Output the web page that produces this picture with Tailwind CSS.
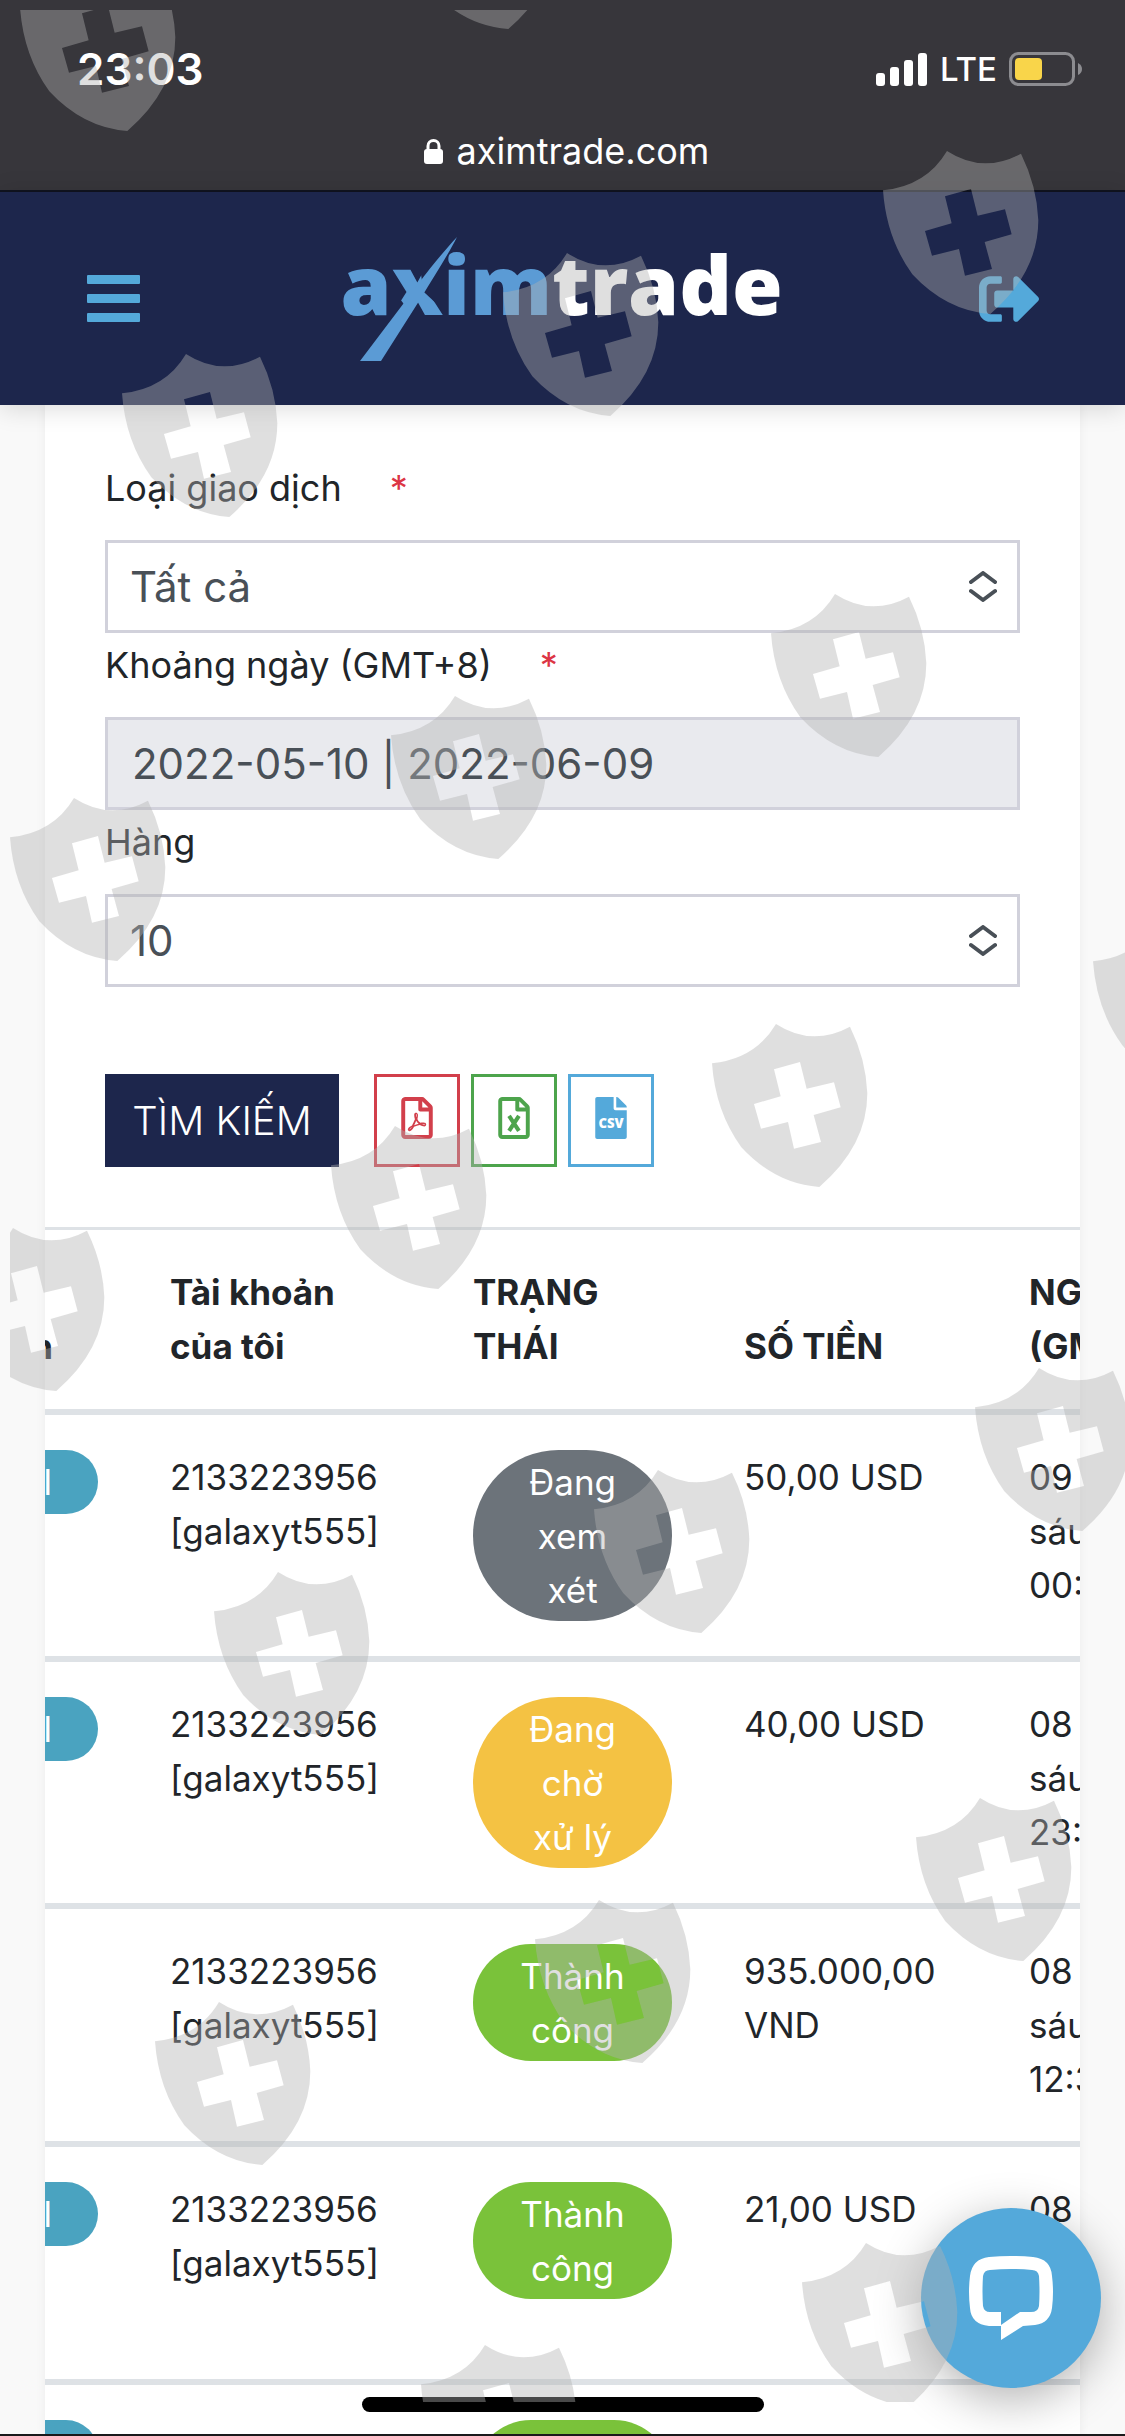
<!DOCTYPE html>
<html lang="vi">
<head>
  <meta charset="UTF-8" />
  <meta name="viewport" content="width=device-width, initial-scale=1.0" />
  <title>AximTrade</title>
  <script src="https://cdn.jsdelivr.net/npm/@tailwindcss/browser@4"></script>
</head>
<body class="bg-[#f9f9f9] font-[Inter,'Noto_Sans',sans-serif] text-[#212529]">
  <div class="relative flex flex-col h-screen overflow-hidden">

    <!-- Status bar -->
    <div class="shrink-0 bg-[#37363b] text-white border-b-2 border-[#10131f] pt-[42px] pb-[12px]">
      <div class="flex items-center justify-between h-[54px] pl-[77px] pr-[43px]">
        <span class="text-[44px] font-semibold">23:03</span>
        <div class="flex items-center gap-[12px]">
          <svg class="w-[52px] h-[33px]" viewBox="0 0 52 33" fill="#fff">
            <rect x="0" y="20" width="9" height="13" rx="3" />
            <rect x="14" y="14" width="9" height="19" rx="3" />
            <rect x="28" y="7" width="9" height="26" rx="3" />
            <rect x="42" y="0" width="9" height="33" rx="3" />
          </svg>
          <span class="text-[33px] leading-[54px] font-medium">LTE</span>
          <svg class="w-[73px] h-[34px]" viewBox="0 0 73 34">
            <rect x="1.5" y="1.5" width="63" height="31" rx="8" fill="none" stroke="#8c8c90" stroke-width="3" />
            <rect x="6" y="6" width="27" height="22" rx="4" fill="#f9d54a" />
            <path d="M69 11q4 2 4 6t-4 6z" fill="#8c8c90" />
          </svg>
        </div>
      </div>
      <div class="flex items-center justify-center gap-[14px] h-[54px] mt-[28px] pl-[8px]">
        <svg class="w-[19px] h-[26px]" viewBox="0 0 19 26">
          <path d="M4 12V8a5.500 5.500 0 0 1 11 0v4" fill="none" stroke="#fff" stroke-width="3" />
          <rect x="0" y="11" width="19" height="15" rx="3" fill="#fff" />
        </svg>
        <span class="text-[36px] leading-[54px]">aximtrade.com</span>
      </div>
    </div>

    <!-- Header -->
    <header class="relative z-10 shrink-0 flex items-center justify-between h-[213px] bg-[#1d264c] pl-[87px] pr-[86px] shadow-[0_3px_24px_rgba(0,0,0,0.15)]">
      <button type="button" aria-label="Menu">
        <svg class="w-[53px] h-[47px]" viewBox="0 0 53 47" fill="#54a9da">
          <rect width="53" height="9" rx="1" />
          <rect y="19" width="53" height="9" rx="1" />
          <rect y="38" width="53" height="9" rx="1" />
        </svg>
      </button>
      <a href="#" class="relative block w-[438px] h-[124px] font-['Open_Sans'] font-extrabold text-[82px] leading-[92px] whitespace-nowrap text-[#5b9bd5]">
        <span>a</span><span class="inline-block [clip-path:polygon(0_0,46%_0,62%_60%,100%_80%,100%_100%,60%_100%,0_56%)]">x</span><span>im</span><span class="text-white">trade</span>
        <svg class="absolute left-[18px] top-0 w-[100px] h-[124px]" viewBox="0 0 100 124" fill="#5b9bd5">
          <path d="M98 0C86 13 70 32 60 46L1 124H22L62 61C76 38 90 16 98 0z" />
        </svg>
      </a>
      <button type="button" aria-label="Đăng xuất">
        <svg class="w-[60px] h-[46px]" viewBox="0 64 504 384" fill="#54a9da">
          <path d="M497 273L329 441c-15 15-41 4.500-41-17v-96H152c-13.300 0-24-10.700-24-24v-96c0-13.300 10.700-24 24-24h136V88c0-21.400 25.900-32 41-17l168 168c9.300 9.400 9.300 24.600 0 34zM192 436v-40c0-6.600-5.400-12-12-12H96c-17.700 0-32-14.300-32-32V160c0-17.700 14.300-32 32-32h84c6.600 0 12-5.400 12-12V76c0-6.600-5.400-12-12-12H96c-53 0-96 43-96 96v192c0 53 43 96 96 96h84c6.600 0 12-5.400 12-12z" />
        </svg>
      </button>
    </header>

    <!-- Card -->
    <main class="grow min-h-0 mx-[45px] bg-white shadow-[0_0_10px_rgba(0,0,0,0.06)]">
      <form class="px-[60px] pt-[51px]">
        <div>
          <label for="type" class="flex gap-[48px] h-[84px] pt-[5px] text-[36px] leading-[54px]">Loại giao dịch <span class="text-[#dc3545]">*</span></label>
          <div class="relative">
            <select id="type" class="appearance-none block w-full h-[93px] border-3 border-[#d1d1db] bg-white px-[22px] text-[42px] text-[#495057]">
              <option>Tất cả</option>
            </select>
            <svg class="absolute right-[23px] top-[31px] w-[28px] h-[31px] pointer-events-none" viewBox="0 0 28 31" fill="none" stroke="#495057" stroke-width="4" stroke-linecap="round" stroke-linejoin="round">
              <path d="M2 11L14 2l12 9M2 20l12 9 12-9" />
            </svg>
          </div>
        </div>
        <div>
          <label for="range" class="flex gap-[48px] h-[84px] pt-[5px] text-[36px] leading-[54px]">Khoảng ngày (GMT+8) <span class="text-[#dc3545]">*</span></label>
          <input id="range" type="text" readonly value="2022-05-10 | 2022-06-09" class="block w-full h-[93px] border-3 border-[#d1d1db] bg-[#e9eaee] px-[24px] text-[42px] text-[#495057]" />
        </div>
        <div>
          <label for="rows" class="flex h-[84px] pt-[5px] text-[36px] leading-[54px]">Hàng</label>
          <div class="relative">
            <select id="rows" class="appearance-none block w-full h-[93px] border-3 border-[#d1d1db] bg-white px-[22px] text-[42px] text-[#495057]">
              <option>10</option>
            </select>
            <svg class="absolute right-[23px] top-[31px] w-[28px] h-[31px] pointer-events-none" viewBox="0 0 28 31" fill="none" stroke="#495057" stroke-width="4" stroke-linecap="round" stroke-linejoin="round">
              <path d="M2 11L14 2l12 9M2 20l12 9 12-9" />
            </svg>
          </div>
        </div>
        <div class="flex h-[93px] mt-[87px] mb-[60px]">
          <button type="submit" class="w-[234px] mr-[35px] bg-[#1d264c] text-white text-[40px] font-light">TÌM KIẾM</button>
          <div class="flex gap-[11px]">
            <button type="button" aria-label="PDF" class="flex justify-center pt-[20px] w-[86px] border-3 border-[#d23f4b] text-[#d23f4b]">
              <svg class="w-[32px] h-[42px]" viewBox="0 0 384 512" fill="currentColor">
                <path d="M369.900 97.900L286 14C277 5 264.800-.1 252.100-.1H48C21.500 0 0 21.500 0 48v416c0 26.500 21.500 48 48 48h288c26.500 0 48-21.500 48-48V131.900c0-12.700-5.100-25-14.100-34zM332.100 128H256V51.900l76.100 76.100zM48 464V48h160v104c0 13.300 10.700 24 24 24h104v288H48zm250.200-143.700c-12.200-12-47-8.700-64.400-6.500-17.200-10.500-28.700-25-36.800-46.300 3.900-16.100 10.100-40.600 5.400-56-4.200-26.200-37.800-23.600-42.600-5.900-4.400 16.100-.4 38.500 7 67.100-10 23.900-24.900 56-35.400 74.400-20 10.300-47 26.200-51 46.200-3.300 15.800 26 55.200 76.100-31.200 22.400-7.400 46.800-16.500 68.400-20.100 18.900 10.200 41 17 55.800 17 25.500 0 28-28.200 17.500-38.700zm-198.100 77.800c5.100-13.700 24.500-29.500 30.400-35-19 30.300-30.400 35.700-30.400 35zm81.600-190.600c7.400 0 6.700 32.100 1.800 40.800-4.400-13.900-4.300-40.800-1.800-40.800zm-24.400 136.600c9.700-16.900 18-37 24.700-54.700 8.300 15.100 18.900 27.200 30.100 35.500-20.800 4.300-38.900 13.100-54.800 19.200zm131.600-5s-5 6-37.300-7.800c35.100-2.600 40.900 5.400 37.300 7.800z" />
              </svg>
            </button>
            <button type="button" aria-label="Excel" class="flex justify-center pt-[20px] w-[86px] border-3 border-[#4da44c] text-[#4da44c]">
              <svg class="w-[32px] h-[42px]" viewBox="0 0 384 512" fill="currentColor">
                <path d="M369.900 97.900L286 14C277 5 264.800-.1 252.100-.1H48C21.500 0 0 21.500 0 48v416c0 26.500 21.500 48 48 48h288c26.500 0 48-21.500 48-48V131.900c0-12.700-5.100-25-14.100-34zM332.100 128H256V51.900l76.100 76.100zM48 464V48h160v104c0 13.300 10.700 24 24 24h104v288H48z" />
                <path d="M132 230l120 184M252 230L132 414" fill="none" stroke="currentColor" stroke-width="50" />
              </svg>
            </button>
            <button type="button" aria-label="CSV" class="flex justify-center pt-[20px] w-[86px] border-3 border-[#54a9da] text-[#54a9da]">
              <svg class="w-[32px] h-[42px]" viewBox="0 0 384 512">
                <path d="M224 136V0H24C10.700 0 0 10.700 0 24v464c0 13.300 10.700 24 24 24h336c13.300 0 24-10.700 24-24V160H248c-13.200 0-24-10.800-24-24zM384 122v6H256V0h6c6.400 0 12.500 2.500 17 7l98 98c4.500 4.500 7 10.600 7 17z" fill="currentColor" />
                <text x="192" y="382" text-anchor="middle" font-family="Open Sans" font-weight="800" font-size="160" fill="#fff">CSV</text>
              </svg>
            </button>
          </div>
        </div>
      </form>

      <!-- Transactions -->
      <div id="tableWrap" class="overflow-x-auto [scrollbar-width:none] border-t-3 border-[#dee2e6]">
        <table class="table-fixed w-[1459px] text-left text-[35px] leading-[54px]">
          <colgroup>
            <col class="w-[300px]" />
            <col class="w-[303px]" />
            <col class="w-[271px]" />
            <col class="w-[285px]" />
            <col class="w-[300px]" />
          </colgroup>
          <thead>
            <tr class="border-b-6 border-[#dee2e6] align-bottom font-bold">
              <th class="pr-[81px] pt-[35px] pb-[36px] text-right whitespace-nowrap">Phương tiện</th>
              <th class="px-[36px] pt-[35px] pb-[36px]">Tài khoản<br />của tôi</th>
              <th class="px-[36px] pt-[35px] pb-[36px]">TRẠNG<br />THÁI</th>
              <th class="px-[36px] pt-[35px] pb-[36px]">SỐ TIỀN</th>
              <th class="px-[36px] pt-[35px] pb-[36px]">NGÀY<br />(GMT+8)</th>
            </tr>
          </thead>
          <tbody>
            <tr class="border-b-6 border-[#dee2e6] align-top">
              <td class="px-[36px] py-[35px]"><span class="block rounded-[32px] bg-[#4aa3c0] text-white text-right py-[5px] pr-[46px]">Local</span></td>
              <td class="px-[36px] py-[35px]">2133223956<br />[galaxyt555]</td>
              <td class="px-[36px] py-[35px]"><span class="block rounded-full bg-[#6c737a] text-white text-center pt-[5px] pb-[4px]">Đang<br />xem<br />xét</span></td>
              <td class="px-[36px] py-[35px]">50,00 USD</td>
              <td class="px-[36px] py-[35px]">09 tháng<br />sáu 2022<br />00:02:11</td>
            </tr>
            <tr class="border-b-6 border-[#dee2e6] align-top">
              <td class="px-[36px] py-[35px]"><span class="block rounded-[32px] bg-[#4aa3c0] text-white text-right py-[5px] pr-[46px]">Local</span></td>
              <td class="px-[36px] py-[35px]">2133223956<br />[galaxyt555]</td>
              <td class="px-[36px] py-[35px]"><span class="block rounded-full bg-[#f4c243] text-white text-center pt-[5px] pb-[4px]">Đang<br />chờ<br />xử lý</span></td>
              <td class="px-[36px] py-[35px]">40,00 USD</td>
              <td class="px-[36px] py-[35px]">08 tháng<br />sáu 2022<br />23:40:05</td>
            </tr>
            <tr class="border-b-6 border-[#dee2e6] align-top">
              <td></td>
              <td class="px-[36px] py-[35px]">2133223956<br />[galaxyt555]</td>
              <td class="px-[36px] py-[35px]"><span class="block rounded-[58px] bg-[#7ac23a] text-white text-center pt-[5px] pb-[4px]">Thành<br />công</span></td>
              <td class="px-[36px] py-[35px]">935.000,00<br />VND</td>
              <td class="px-[36px] py-[35px]">08 tháng<br />sáu 2022<br />12:31:40</td>
            </tr>
            <tr class="border-b-6 border-[#dee2e6] align-top">
              <td class="px-[36px] py-[35px]"><span class="block rounded-[32px] bg-[#4aa3c0] text-white text-right py-[5px] pr-[46px]">Local</span></td>
              <td class="px-[36px] py-[35px]">2133223956<br />[galaxyt555]</td>
              <td class="px-[36px] py-[35px]"><span class="block rounded-[58px] bg-[#7ac23a] text-white text-center pt-[5px] pb-[4px]">Thành<br />công</span></td>
              <td class="px-[36px] py-[35px]">21,00 USD</td>
              <td class="px-[36px] py-[35px]">08 tháng<br />sáu 2022<br />10:15:22</td>
            </tr>
            <tr class="align-top">
              <td class="px-[36px] py-[35px]"><span class="block rounded-[32px] bg-[#4aa3c0] text-white text-right py-[5px] pr-[46px]">Local</span></td>
              <td class="px-[36px] py-[35px]">2133223956<br />[galaxyt555]</td>
              <td class="px-[36px] py-[35px]"><span class="block rounded-[58px] bg-[#7ac23a] text-white text-center pt-[5px] pb-[4px]">Thành<br />công</span></td>
              <td class="px-[36px] py-[35px]">20,00 USD</td>
              <td class="px-[36px] py-[35px]">08 tháng<br />sáu 2022<br />09:48:10</td>
            </tr>
          </tbody>
        </table>
      </div>
    </main>

    <!-- Chat -->
    <button type="button" aria-label="Chat" class="absolute z-20 right-[24px] bottom-[48px] flex items-center justify-center size-[180px] rounded-full bg-[#54a9da] shadow-[0_12px_48px_rgba(0,0,0,0.3)]">
      <svg class="w-[84px] h-[84px]" viewBox="0 0 84 84">
        <path fill-rule="evenodd" fill="#fff" d="M20 1Q42-1 64 1Q82 3 83 20Q85 36 83 52Q81 67 66 69L54 70L32 84V70H20Q2 68 1 52Q-1 36 1 20Q3 3 20 1zM21 14Q15 14 14 20Q13 36 14 50Q15 56 21 56H32V69L51 56H62Q69 56 70 50Q71 36 70 20Q69 14 63 14Q42 12 21 14z" />
      </svg>
    </button>

    <!-- Home indicator -->
    <div class="absolute z-20 bottom-[24px] left-1/2 -translate-x-1/2 w-[402px] h-[15px] rounded-full bg-black"></div>
    <div class="absolute z-20 bottom-0 inset-x-0 h-[2px] bg-[#1a1a1c]"></div>

    <!-- Shield watermark -->
    <svg class="absolute z-30 inset-0 w-full h-full pointer-events-none" fill="#b1b1b1" fill-opacity="0.41">
      <defs>
        <clipPath id="area"><rect x="10" y="10" width="2000" height="2392" /></clipPath>
        <path id="shield" transform="scale(0.3333)" fill-rule="evenodd" d="M192 0Q300 70 414 8Q462 105 466 208Q466 365 322 489Q190 480 88 370Q10 262 0 118Q130 105 192 0zM186 136L206 217 126 240 147 314 228 294 246 374 327 354 305 273 386 250 366 175 284 194 264 114z" />
      </defs>
      <g clip-path="url(#area)">
        <use href="#shield" transform="translate(20 -32)" />
        <use href="#shield" transform="translate(401 -134)" />
        <use href="#shield" transform="translate(883 151)" />
        <use href="#shield" transform="translate(503 253)" />
        <use href="#shield" transform="translate(122 354)" />
        <use href="#shield" transform="translate(771 594)" />
        <use href="#shield" transform="translate(391 696)" />
        <use href="#shield" transform="translate(10 798)" />
        <use href="#shield" transform="translate(1093 922)" />
        <use href="#shield" transform="translate(712 1024)" />
        <use href="#shield" transform="translate(331 1126)" />
        <use href="#shield" transform="translate(-51 1228)" />
        <use href="#shield" transform="translate(975 1368)" />
        <use href="#shield" transform="translate(594 1470)" />
        <use href="#shield" transform="translate(214 1572)" />
        <use href="#shield" transform="translate(916 1798)" />
        <use href="#shield" transform="translate(535 1900)" />
        <use href="#shield" transform="translate(155 2002)" />
        <use href="#shield" transform="translate(802 2243)" />
        <use href="#shield" transform="translate(421 2345)" />
      </g>
    </svg>
  </div>

  <script>
    const tableWrap = document.getElementById('tableWrap');
    tableWrap.scrollLeft = 211;
  </script>
</body>
</html>
